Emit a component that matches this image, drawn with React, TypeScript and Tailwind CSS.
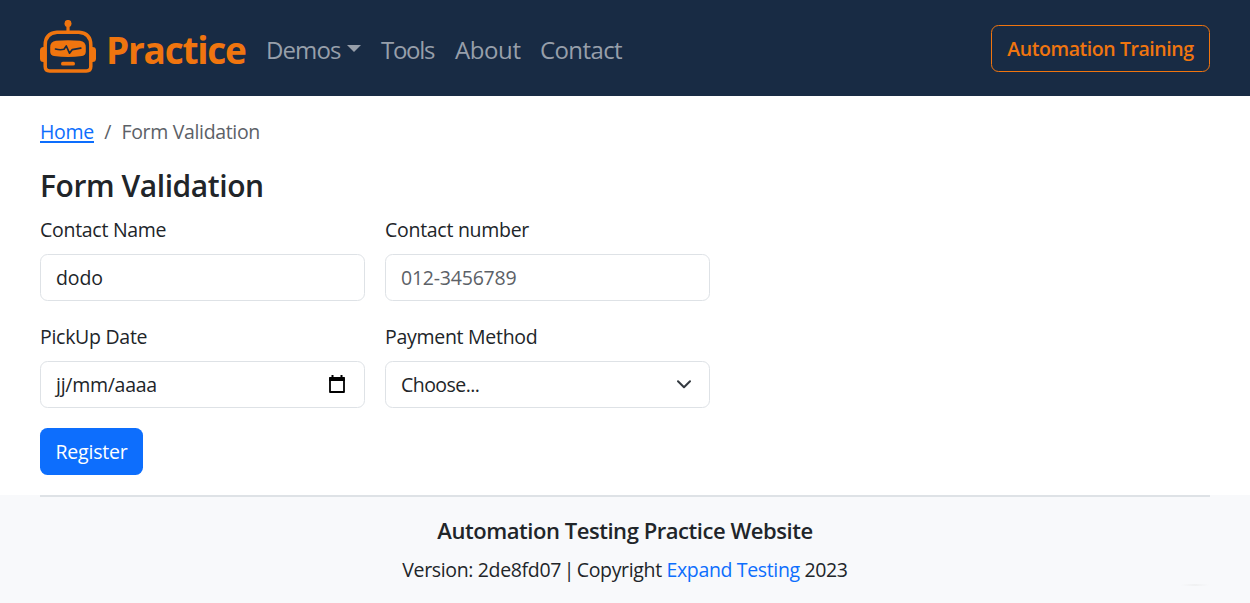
import type { ReactNode } from "react";

function Robot() {
  return (
    <svg className="mb-0.5 h-[54px] w-14 shrink-0" viewBox="40 20 56 54" fill="none" aria-hidden="true">
      <g fill="#f0750f">
        <circle cx="68" cy="23.4" r="3.5" />
        <path d="M66.4 25h3.2v7h-3.2z" />
        <path d="M44.5 47h-1a3.5 3.5 0 0 0-3.5 3.5v8a3.500 3.500 0 0 0 3.500 3.500h1zM91.500 47h1a3.500 3.500 0 0 1 3.500 3.500v8a3.500 3.500 0 0 1-3.500 3.500h-1z" />
        <path d="M56 40.800Q68 39.600 80 40.800Q85.800 41.400 85.800 47.500V51.500Q85.800 55.400 82 56Q68 58 54 56Q50.200 55.400 50.200 51.500V47.500Q50.200 41.400 56 40.800Z" />
        <rect x="61" y="61.800" width="14" height="3.800" rx="1.900" />
      </g>
      <path d="M57 32.200h22q11.800 1 11.800 12.800v21.500q0 4.500-4.500 4.500h-36.600q-4.500 0-4.500-4.500v-21.500q0-11.800 11.800-12.800z" stroke="#f0750f" strokeWidth="3.500" />
      <path d="M55.500 49Q60 50.300 64 49.300L66.300 46L69.500 53.200L72.300 49.600L80.800 48.200" stroke="#182b44" strokeWidth="1.700" strokeLinecap="round" strokeLinejoin="round" />
    </svg>
  );
}

function Field({ label, children }: { label: string; children: ReactNode }) {
  return (
    <label className="flex w-[325px] flex-col gap-[9px]">
      <span className="h-[30px] leading-[30px]">{label}</span>
      <span className="flex h-[47px] items-center justify-between rounded-[7.500px] border border-[#dee2e6] bg-white px-[15px]">
        {children}
      </span>
    </label>
  );
}

export default function App() {
  return (
    <div className="flex h-[603px] flex-col overflow-hidden bg-white font-['Open_Sans',sans-serif] text-[19.500px] leading-[30px] tracking-[-0.280px] text-[#212529]">
      <header className="flex h-24 shrink-0 items-center justify-between bg-[#182b44] px-10">
        <div className="flex items-center">
          <a className="flex items-center gap-[10px]">
            <Robot />
            <span className="w-[140px] whitespace-nowrap pt-1 text-[37px] font-bold leading-[46px] tracking-[-1.250px] text-[#f0750f]">Practice</span>
          </a>
          <nav className="ml-5 flex items-center whitespace-nowrap pt-[3px] text-[24px] leading-[36px] tracking-[-0.400px] text-[#979faa]">
            <a className="flex w-[115px] items-center gap-[6px]">
              <span className="w-[75px] tracking-[-0.900px]">Demos</span>
              <svg className="mb-[3px] h-[7px] w-[14px]" viewBox="0 0 14 7" fill="currentColor" aria-hidden="true"><path d="M0 0h14L7 7z" /></svg>
            </a>
            <a className="w-[74px] tracking-[-1.300px]">Tools</a>
            <a className="w-[85px]">About</a>
            <a className="tracking-[-0.600px]">Contact</a>
          </nav>
        </div>
        <button className="h-[47px] w-[219px] whitespace-nowrap rounded-[7.500px] border border-[#f0750f] pt-0.5 text-[19.500px] font-semibold tracking-[-0.430px] text-[#f0750f]">Automation Training</button>
      </header>

      <main className="flex h-[399px] shrink-0 flex-col items-start px-10 pt-[21px]">
        <nav className="flex whitespace-nowrap">
          <a className="w-[54px] text-[#0d6efd] underline decoration-2 underline-offset-[2px]">Home</a>
          <span className="w-[27.500px] text-center text-[#5c6167]">/</span>
          <span className="tracking-[-0.340px] text-[#5c6167]">Form Validation</span>
        </nav>
        <h1 className="mt-5 h-[38px] whitespace-nowrap text-[30px] font-semibold leading-[38px] tracking-[-0.430px]">Form Validation</h1>
        <form className="mt-[10px] grid grid-cols-[325px_325px] gap-x-5 gap-y-[21px]">
          <Field label="Contact Name">
            <input className="w-full bg-transparent tracking-[-0.100px] outline-none" defaultValue="dodo" />
          </Field>
          <Field label="Contact number">
            <input className="w-full bg-transparent tracking-[-0.220px] outline-none placeholder:text-[#5c6167]" placeholder="012-3456789" />
          </Field>
          <Field label="PickUp Date">
            <span>jj/mm/aaaa</span>
            <svg className="mr-1 mb-[1px] h-[19px] w-4" viewBox="0 0 16 19" fill="none" aria-hidden="true">
              <path d="M1 3.500h14v13.500H1z" stroke="#000" strokeWidth="1.800" strokeLinejoin="round" />
              <path d="M0.200 2h15.600v4H0.200zM2.500 0h2v3h-2zM11.500 0h2v3h-2z" fill="#000" />
            </svg>
          </Field>
          <Field label="Payment Method">
            <span className="tracking-[-0.550px]">Choose...</span>
            <svg className="mr-[3px] h-[9px] w-[14px]" viewBox="0 0 14 9" fill="none" aria-hidden="true">
              <path d="M1 1.200l6 6 6-6" stroke="#343a40" strokeWidth="2" strokeLinecap="round" strokeLinejoin="round" />
            </svg>
          </Field>
        </form>
        <button className="mt-5 h-[47px] w-[103px] rounded-[7.500px] bg-[#0d6efd] tracking-[-0.220px] text-white">Register</button>
      </main>

      <footer className="relative flex-1 bg-[#f8f9fb] px-10">
        <div className="flex flex-col items-center whitespace-nowrap border-t-2 border-[#dee2e6] pt-[18px]">
          <h2 className="text-[22px] font-semibold leading-[30px] tracking-[-0.450px]">Automation Testing Practice Website</h2>
          <p className="mt-[10px] tracking-[-0.350px]">Version: 2de8fd07 <span className="-mx-[2px]">|</span> Copyright <a className="text-[#0d6efd]">Expand Testing</a> 2023</p>
        </div>
        <span className="absolute right-[41px] bottom-[17px] h-[2px] w-7 bg-linear-to-r from-transparent via-[#f0f1f2] to-transparent" />
      </footer>
    </div>
  );
}
